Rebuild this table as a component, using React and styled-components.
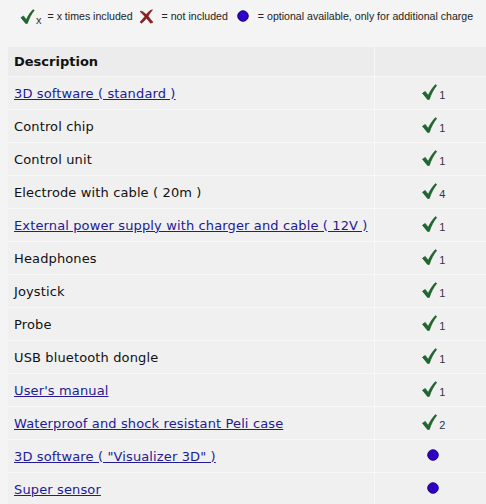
import React from "react";
import styled, { createGlobalStyle } from "styled-components";

const Global = createGlobalStyle`
  html, body { margin: 0; padding: 0; background: #f4f4f4; }
  body { padding: 0 0 0 8px; font-family: "DejaVu Sans", Verdana, sans-serif; }
`;

const Legend = styled.div`
  display: flex;
  align-items: center;
  height: 32px;
  padding-left: 12px;
  font-family: "Liberation Sans", Arial, sans-serif;
  font-size: 10.6px;
  color: #222;
  white-space: nowrap;
`;

const LegendItem = styled.span`
  display: inline-flex;
  align-items: center;
  flex-shrink: 0;
  margin-right: ${(p) => p.$gap ?? 6}px;
`;

const LegendSub = styled.span`
  font-size: 11px;
  margin: 8px 6px 0 1px;
  color: #333;
`;

const Table = styled.table`
  margin-top: 15px;
  width: 478px;
  border-collapse: separate;
  border-spacing: 0;
  font-size: 13px;
  letter-spacing: 0.13px;
`;

const Th = styled.th`
  background: #ececec;
  text-align: left;
  font-weight: bold;
  height: 29px;
  padding: 0 6px;
  border-bottom: 1px solid #f7f7f7;
  border-right: ${(p) => (p.$first ? "1px solid #f7f7f7" : "none")};
  color: #111;
  letter-spacing: 0;
  width: ${(p) => (p.$first ? "353px" : "auto")};
`;

const Td = styled.td`
  background: #f0f0f0;
  height: 32px;
  padding: 0 6px;
  white-space: nowrap;
  border-bottom: 1px solid #f8f8f8;
  border-right: ${(p) => (p.$first ? "1px solid #f8f8f8" : "none")};
  text-align: ${(p) => (p.$center ? "center" : "left")};
  color: #111;
`;

const Link = styled.a`
  color: #231a96;
  text-decoration: underline;
`;

const Mark = styled.span`
  display: inline-flex;
  align-items: flex-end;
  margin-left: 6px;
`;

const Sub = styled.span`
  font-family: "Liberation Sans", Arial, sans-serif;
  font-size: 11px;
  color: #333344;
  margin-left: 1px;
  line-height: 11px;
  margin-bottom: -1px;
`;

const Check = ({ w = 17, h = 16 }) => (
  <svg width={w} height={h} viewBox="0 0 15 16">
    <path
      d="M0.5 9.2 L3.2 7.4 L6.2 11.4 C8.5 6.8 10.8 3.2 13.6 0.6 L14.6 1.6 C11.6 5.2 9.2 9.8 7.3 15.4 L5.6 15.4 Z"
      fill="#1d6a2c"
      stroke="#0f4a1c"
      strokeWidth="0.6"
      strokeLinejoin="round"
    />
  </svg>
);

const Cross = () => (
  <svg width="15" height="15" viewBox="0 0 15 15">
    <path
      d="M1 2.5 C3 1.5 4.5 3 7.2 5.6 C9.5 3 11 1 13.5 0.8 C12 3 10.5 4.6 9.2 7.2 C10.8 9.5 12.5 11.5 14 13.2 L11.5 14.2 C10 12.2 8.8 10.8 7.6 9.2 C6 11 4.2 13 2.4 14.2 L1 13 C3 11 4.5 9.2 5.8 7.4 C4.2 5.4 2.6 3.8 1 2.5 Z"
      fill="#8e1c1c"
      stroke="#6a1010"
      strokeWidth="0.5"
    />
  </svg>
);

const Dot = () => (
  <svg width="12" height="12" viewBox="0 0 12 12">
    <circle cx="6" cy="6" r="5.3" fill="#2f00c8" stroke="#16006a" strokeWidth="0.9" />
  </svg>
);

const rows = [
  { label: "3D software ( standard )", link: true, n: 1 },
  { label: "Control chip", n: 1 },
  { label: "Control unit", n: 1 },
  { label: "Electrode with cable ( 20m )", n: 4 },
  { label: "External power supply with charger and cable ( 12V )", link: true, n: 1 },
  { label: "Headphones", n: 1 },
  { label: "Joystick", n: 1 },
  { label: "Probe", n: 1 },
  { label: "USB bluetooth dongle", n: 1 },
  { label: "User's manual", link: true, n: 1 },
  { label: "Waterproof and shock resistant Peli case", link: true, n: 2 },
  { label: "3D software ( \"Visualizer 3D\" )", link: true, opt: true },
  { label: "Super sensor", link: true, opt: true },
];

export default function App() {
  return (
    <>
      <Global />
      <Legend>
        <LegendItem $gap={0}>
          <Check w={15} h={15} />
          <LegendSub>x</LegendSub>
        </LegendItem>
        <LegendItem $gap={6}>= x times included</LegendItem>
        <LegendItem $gap={8}>
          <Cross />
        </LegendItem>
        <LegendItem $gap={9}>= not included</LegendItem>
        <LegendItem $gap={9}>
          <Dot />
        </LegendItem>
        <LegendItem>= optional available, only for additional charge</LegendItem>
      </Legend>
      <Table>
        <thead>
          <tr>
            <Th $first>Description</Th>
            <Th />
          </tr>
        </thead>
        <tbody>
          {rows.map((r) => (
            <tr key={r.label}>
              <Td $first>{r.link ? <Link href="#">{r.label}</Link> : r.label}</Td>
              <Td $center>
                {r.opt ? (
                  <Mark>
                    <Dot />
                  </Mark>
                ) : (
                  <Mark>
                    <Check />
                    <Sub>{r.n}</Sub>
                  </Mark>
                )}
              </Td>
            </tr>
          ))}
        </tbody>
      </Table>
    </>
  );
}
